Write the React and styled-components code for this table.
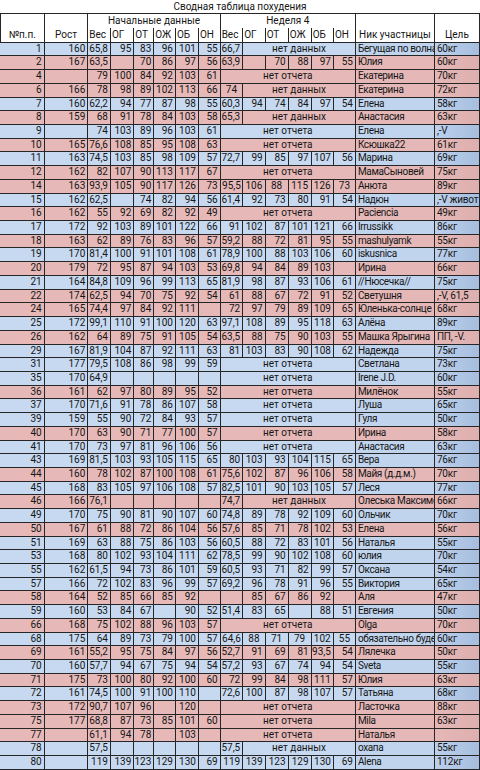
import React from 'react';
import styled, { createGlobalStyle, css } from 'styled-components';

const GlobalStyle = createGlobalStyle`
  html, body { margin: 0; padding: 0; background: #ffffff; }
  body { font-family: Roboto, "Noto Sans", "Liberation Sans", sans-serif; color: #161616; }
`;

const COLS = '44.7px 43.6px 22.7px 23.3px 20px 21.7px 23px 21.7px 22.6px 22.4px 23px 23px 22.3px 22px 79px 45px';
const ROW_H = 13.72;
const LINE = '#262626';

const Sheet = styled.div`
  width: 480px;
  font-size: 10px;
  overflow: hidden;
`;

const Title = styled.div`
  height: 14px;
  box-sizing: border-box;
  border-bottom: 1px solid ${LINE};
  text-align: center;
  line-height: 13px;
  font-size: 10px;
`;

const HeadGrid = styled.div`
  display: grid;
  grid-template-columns: ${COLS};
  grid-template-rows: 14.35px 14.35px;
  border-bottom: 1px solid ${LINE};
  box-sizing: border-box;
  height: 28.7px;
`;

const HeadCell = styled.div`
  grid-column: ${p => p.$col};
  grid-row: ${p => p.$row};
  box-sizing: border-box;
  border-right: 1px solid ${LINE};
  ${p => p.$first && css`border-left: 1px solid ${LINE};`}
  display: flex;
  align-items: ${p => (p.$mid ? 'center' : 'flex-end')};
  justify-content: ${p => (p.$left ? 'flex-start' : 'center')};
  padding: 0 0 ${p => (p.$mid ? '0' : '2px')} ${p => (p.$left ? '1px' : '0')};
  white-space: nowrap;
  overflow: hidden;
  line-height: 12px;
`;

const Row = styled.div`
  display: grid;
  grid-template-columns: ${COLS};
  height: ${ROW_H}px;
  background: ${p => (p.$tone === 'b' ? '#c6d9f0' : '#e6b9b8')};
`;

const Cell = styled.div`
  grid-column: span ${p => p.$span || 1};
  box-sizing: border-box;
  border-right: 1px solid ${LINE};
  border-bottom: 1px solid ${LINE};
  white-space: nowrap;
  overflow: hidden;
  line-height: ${ROW_H - 1}px;
  text-align: ${p => p.$align || 'right'};
  padding: ${p =>
    p.$align === 'left' ? '0 0 0 2px' : p.$align === 'center' ? '0' : '0 2px 0 0'};
  ${p =>
    p.$kind === 'name' &&
    css`
      letter-spacing: -0.35px;
      background: ${p.$tone === 'b' ? '#c0d4ee' : '#e5b7b6'};
    `}
  ${p =>
    p.$kind === 'goal' &&
    css`
      letter-spacing: -0.2px;
      background: ${p.$tone === 'b'
        ? 'linear-gradient(90deg, #bcd0ec 0%, #a6bedf 100%)'
        : 'linear-gradient(90deg, #e5b7b6 0%, #ddafae 100%)'};
    `}
`;

const RAW = `1|b|160|65,8 95 83 96 101 55|nd:66,7|Бегущая по волнам|60кг
2|p|167|63,5 - 70 86 97 56|63,9 - 70 88 97 55|Юлия|60кг
4|p|-|79 100 84 92 103 61|no|Екатерина|70кг
6|p|166|78 98 89 102 113 66|ndc:74|Екатерина|72кг
7|b|160|62,2 94 77 87 98 55|60,3 94 74 84 97 54|Елена|58кг
8|p|159|68 91 78 84 103 58|nd:65,3|Анастасия|63кг
9|b|-|74 103 89 96 103 61|no|Елена|,-V
10|p|165|76,6 108 85 95 108 63|no|Ксюшка22|61кг
11|b|163|74,5 103 85 98 109 57|72,7 99 85 97 107 56|Марина|69кг
12|p|162|82 107 90 113 117 67|no|МамаСыновей|75кг
14|p|163|93,9 105 90 117 126 73|c:95,5 106 88 115 126 73|Анюта|89кг
15|b|162|62,5 - 74 82 94 56|61,4 92 73 80 91 54|Надюн|,-V живот
16|p|162|55 92 69 82 92 49|no|Paciencia|49кг
17|b|172|92 103 89 101 122 66|91 102 87 101 121 66|Irrussikk|86кг
18|p|163|62 89 76 83 96 57|59,2 88 72 81 95 55|mashulyamk|55кг
19|b|170|81,4 100 91 101 108 61|78,9 100 88 103 106 60|iskusnica|77кг
20|p|179|72 95 87 94 103 53|69,8 94 84 89 103 -|Ирина|66кг
21|b|164|84,8 109 96 99 113 65|81,9 98 87 93 106 61|//Нюсечка//|75кг
22|p|174|62,5 94 70 75 92 54|61 88 67 72 91 52|Светушня|,-V, 61,5
24|p|165|74,4 97 84 92 111 -|72 97 79 89 109 65|Юленька-солнце|68кг
25|b|172|99,1 110 91 100 120 63|97,1 108 89 95 118 63|Алёна|89кг
26|p|162|64 89 75 91 105 54|63,5 88 75 90 103 55|Машка Ярыгина|ПП, -V.
29|b|167|81,9 104 87 92 111 63|81 103 83 90 108 62|Надежда|75кг
31|b|177|79,5 108 86 98 99 59|no|Светлана|73кг
35|b|170|64,9 - - - - -|no|Irene J.D.|60кг
36|p|161|62 97 80 89 95 52|no|Милёнок|55кг
37|b|170|71,6 91 78 86 107 58|no|Луша|65кг
39|b|159|55 90 72 84 93 57|no|Гуля|50кг
40|p|170|63 90 71 77 100 57|no|Ирина|58кг
41|b|170|73 97 81 96 106 56|no|Анастасия|63кг
43|b|169|81,5 103 93 105 115 65|80 103 93 104 115 65|Вера|76кг
44|p|160|78 102 87 100 108 61|75,6 102 87 96 106 58|Майя (д.д.м.)|70кг
45|b|168|83 105 97 106 108 57|82,5 101 90 103 105 57|Леся|77кг
46|p|166|76,1 - - - - -|nd:74,7|Олеська Максимова|66кг
49|b|170|75 90 81 90 107 60|74,8 89 78 92 109 60|Ольчик|70кг
50|p|167|61 88 72 86 104 56|57,6 85 71 78 102 53|Елена|56кг
51|b|169|63 88 75 86 103 56|60,5 88 72 83 101 56|Наталья|55кг
53|b|168|80 102 93 104 111 62|78,5 99 90 102 108 60|юлия|70кг
55|b|162|61,5 94 73 86 101 59|60,5 93 71 82 99 57|Оксана|54кг
57|b|166|72 102 83 96 99 57|69,2 96 78 91 96 55|Виктория|65кг
58|p|164|52 85 66 85 92 -|- 85 67 86 92 -|Аля|47кг
59|b|160|53 84 67 - 90 52|51,4 83 65 - 88 51|Евгения|50кг
66|p|168|75 102 88 96 103 57|no|Olga|70кг
68|b|175|64 89 73 79 100 57|c:64,6 88 71 79 102 55|обязательно будет|60кг
69|p|161|55,2 95 75 84 97 56|52,7 91 69 81 93,5 54|Лялечка|50кг
70|b|160|57,7 94 67 75 94 54|57,2 93 67 74 94 54|Sveta|55кг
71|p|175|73 100 80 92 100 60|72 99 84 98 111 57|Юлия|63кг
72|b|161|74,5 100 91 100 110 -|72,6 100 87 98 107 57|Татьяна|68кг
73|p|172|90,7 107 96 - 120 -|no|Ласточка|88кг
75|p|177|68,8 87 73 85 101 60|no|Mila|63кг
77|p|-|61,1 94 78 - 103 -|no|Наталья|-
78|b|-|57,5 - - - - -|nd:57,5|охапа|55кг
80|b|-|119 139 123 129 130 69|119 139 123 129 130 69|Alena|112кг`;

const v = s => (s === '-' ? '' : s);

const DATA = RAW.split('\n').map(line => {
  const [n, tone, h, start, wk, name, goal] = line.split('|');
  return { n, tone, h: v(h), start: start.split(' ').map(v), wk, name, goal: v(goal) };
});

function WeekCells({ wk }) {
  if (wk === 'no') {
    return <Cell $span={6} $align="center">нет отчета</Cell>;
  }
  if (wk.startsWith('nd')) {
    const centered = wk.startsWith('ndc:');
    const val = wk.slice(wk.indexOf(':') + 1);
    return (
      <>
        <Cell $align={centered ? 'center' : 'right'}>{val}</Cell>
        <Cell $span={5} $align="center">нет данных</Cell>
      </>
    );
  }
  const centered = wk.startsWith('c:');
  const vals = (centered ? wk.slice(2) : wk).split(' ').map(v);
  return vals.map((x, i) => (
    <Cell key={i} $align={centered ? 'center' : 'right'}>{x}</Cell>
  ));
}

const subs = ['Вес', 'ОГ', 'ОТ', 'ОЖ', 'ОБ', 'ОН'];

export default function App() {
  return (
    <>
      <GlobalStyle />
      <Sheet>
        <Title>Сводная таблица похудения</Title>
        <HeadGrid>
          <HeadCell $col="1" $row="1 / 3" $first>№п.п.</HeadCell>
          <HeadCell $col="2" $row="1 / 3">Рост</HeadCell>
          <HeadCell $col="3 / 9" $row="1" $mid>Начальные данные</HeadCell>
          <HeadCell $col="9 / 15" $row="1" $mid>Неделя 4</HeadCell>
          {subs.map((s, i) => (
            <HeadCell key={'a' + s} $col={String(3 + i)} $row="2" $left>{s}</HeadCell>
          ))}
          {subs.map((s, i) => (
            <HeadCell key={'b' + s} $col={String(9 + i)} $row="2" $left>{s}</HeadCell>
          ))}
          <HeadCell $col="15" $row="1 / 3">Ник участницы</HeadCell>
          <HeadCell $col="16" $row="1 / 3">Цель</HeadCell>
        </HeadGrid>
        {DATA.map(r => (
          <Row key={r.n} $tone={r.tone}>
            <Cell>{r.n}</Cell>
            <Cell>{r.h}</Cell>
            {r.start.map((x, i) => (
              <Cell key={i}>{x}</Cell>
            ))}
            <WeekCells wk={r.wk} />
            <Cell $align="left" $kind="name" $tone={r.tone}>{r.name}</Cell>
            <Cell $align="left" $kind="goal" $tone={r.tone}>{r.goal}</Cell>
          </Row>
        ))}
      </Sheet>
    </>
  );
}
